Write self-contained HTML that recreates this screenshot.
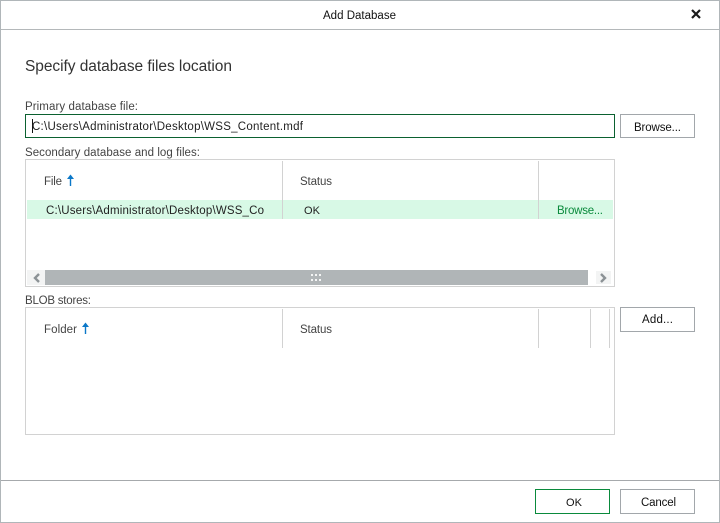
<!DOCTYPE html>
<html><head><meta charset="utf-8"><title>Add Database</title>
<style>
html,body{margin:0;padding:0;background:#fff;width:720px;height:523px;overflow:hidden}
svg{display:block}
text{font-family:"Liberation Sans",sans-serif;font-size:11.5px;fill:#222}
.l{fill:#444}
</style></head><body>
<svg width="720" height="523" viewBox="0 0 720 523" xmlns="http://www.w3.org/2000/svg" shape-rendering="crispEdges">
<rect width="720" height="523" fill="#fff"/>
<rect x="0.5" y="0.5" width="719" height="522" fill="none" stroke="#b0b6b9"/>
<rect x="1" y="29" width="718" height="1" fill="#b4b8ba"/>
<rect x="1" y="480" width="718" height="1" fill="#a6a9ac"/>
<text x="323" y="19" textLength="73" style="fill:#111">Add Database</text>
<path d="M692 10L700 18M700 10L692 18" stroke="#1a1a1a" stroke-width="2.2" fill="none" shape-rendering="auto"/>
<text x="25" y="71" textLength="207" style="font-size:15.5px;fill:#333">Specify database files location</text>
<text class="l" x="25" y="110" textLength="113">Primary database file:</text>
<rect x="25.5" y="114.5" width="589" height="23" fill="#fff" stroke="#0b6130"/>
<rect x="32" y="119" width="1" height="14" fill="#111"/>
<text x="32" y="130" textLength="271" style="fill:#222">C:\Users\Administrator\Desktop\WSS_Content.mdf</text>
<rect x="620.5" y="114.5" width="74" height="23" fill="#fff" stroke="#a2a7ab"/>
<text x="634" y="131" textLength="47" style="fill:#111">Browse...</text>
<text class="l" x="25" y="156" textLength="175">Secondary database and log files:</text>
<rect x="25.5" y="159.5" width="589" height="127" fill="#fff" stroke="#d2d2d2"/>
<rect x="282" y="161" width="1" height="58" fill="#d2d2d2"/>
<rect x="538" y="161" width="1" height="58" fill="#d2d2d2"/>
<text class="l" x="44" y="185" textLength="18">File</text>
<path d="M70.5 177V186" stroke="#0b78c8" stroke-width="1.4" fill="none" shape-rendering="auto"/>
<path d="M67 179L70.5 174.5L74 179Z" fill="#0b78c8" shape-rendering="auto"/>
<text class="l" x="300" y="185" textLength="32">Status</text>
<rect x="27" y="200" width="586" height="19" fill="#d8f9e6"/>
<rect x="282" y="200" width="1" height="19" fill="#d2d2d2"/>
<rect x="538" y="200" width="1" height="19" fill="#d2d2d2"/>
<text x="46" y="214" textLength="218">C:\Users\Administrator\Desktop\WSS_Co</text>
<text x="304" y="214" textLength="16" style="font-size:11px">OK</text>
<text x="557" y="214" textLength="46" style="fill:#0a8a3c">Browse...</text>
<rect x="27" y="270" width="18" height="15" fill="#f3f4f4"/>
<rect x="45" y="270" width="543" height="15" fill="#b0b5b7"/>
<rect x="596" y="271" width="15" height="13" fill="#f3f4f4"/>
<path d="M39 274L35 278L39 282" fill="none" stroke="#8c9296" stroke-width="2.4" shape-rendering="auto"/>
<path d="M601 274L605 278L601 282" fill="none" stroke="#8c9296" stroke-width="2.4" shape-rendering="auto"/>
<g fill="#f4f5f5">
<rect x="311" y="274" width="2" height="2"/><rect x="315" y="274" width="2" height="2"/><rect x="319" y="274" width="2" height="2"/>
<rect x="311" y="279" width="2" height="2"/><rect x="315" y="279" width="2" height="2"/><rect x="319" y="279" width="2" height="2"/>
</g>
<text class="l" x="25" y="304" textLength="66">BLOB stores:</text>
<rect x="25.5" y="307.5" width="589" height="127" fill="#fff" stroke="#d2d2d2"/>
<rect x="282" y="309" width="1" height="39" fill="#d2d2d2"/>
<rect x="538" y="309" width="1" height="39" fill="#d2d2d2"/>
<rect x="590" y="309" width="1" height="39" fill="#d2d2d2"/>
<rect x="609" y="309" width="1" height="39" fill="#d2d2d2"/>
<text class="l" x="44" y="333" textLength="33">Folder</text>
<path d="M85.5 325V334" stroke="#0b78c8" stroke-width="1.4" fill="none" shape-rendering="auto"/>
<path d="M82 327L85.5 322.5L89 327Z" fill="#0b78c8" shape-rendering="auto"/>
<text class="l" x="300" y="333" textLength="32">Status</text>
<rect x="620.5" y="307.5" width="74" height="24" fill="#fff" stroke="#a2a7ab"/>
<text x="642" y="323" textLength="31" style="fill:#111">Add...</text>
<rect x="535.5" y="489.5" width="74" height="24" fill="#fff" stroke="#0a8a3c"/>
<text x="566" y="506" textLength="16" style="font-size:11px;fill:#111">OK</text>
<rect x="620.5" y="489.5" width="74" height="24" fill="#fff" stroke="#a2a7ab"/>
<text x="641" y="506" textLength="35" style="fill:#111">Cancel</text>
</svg>
</body></html>
